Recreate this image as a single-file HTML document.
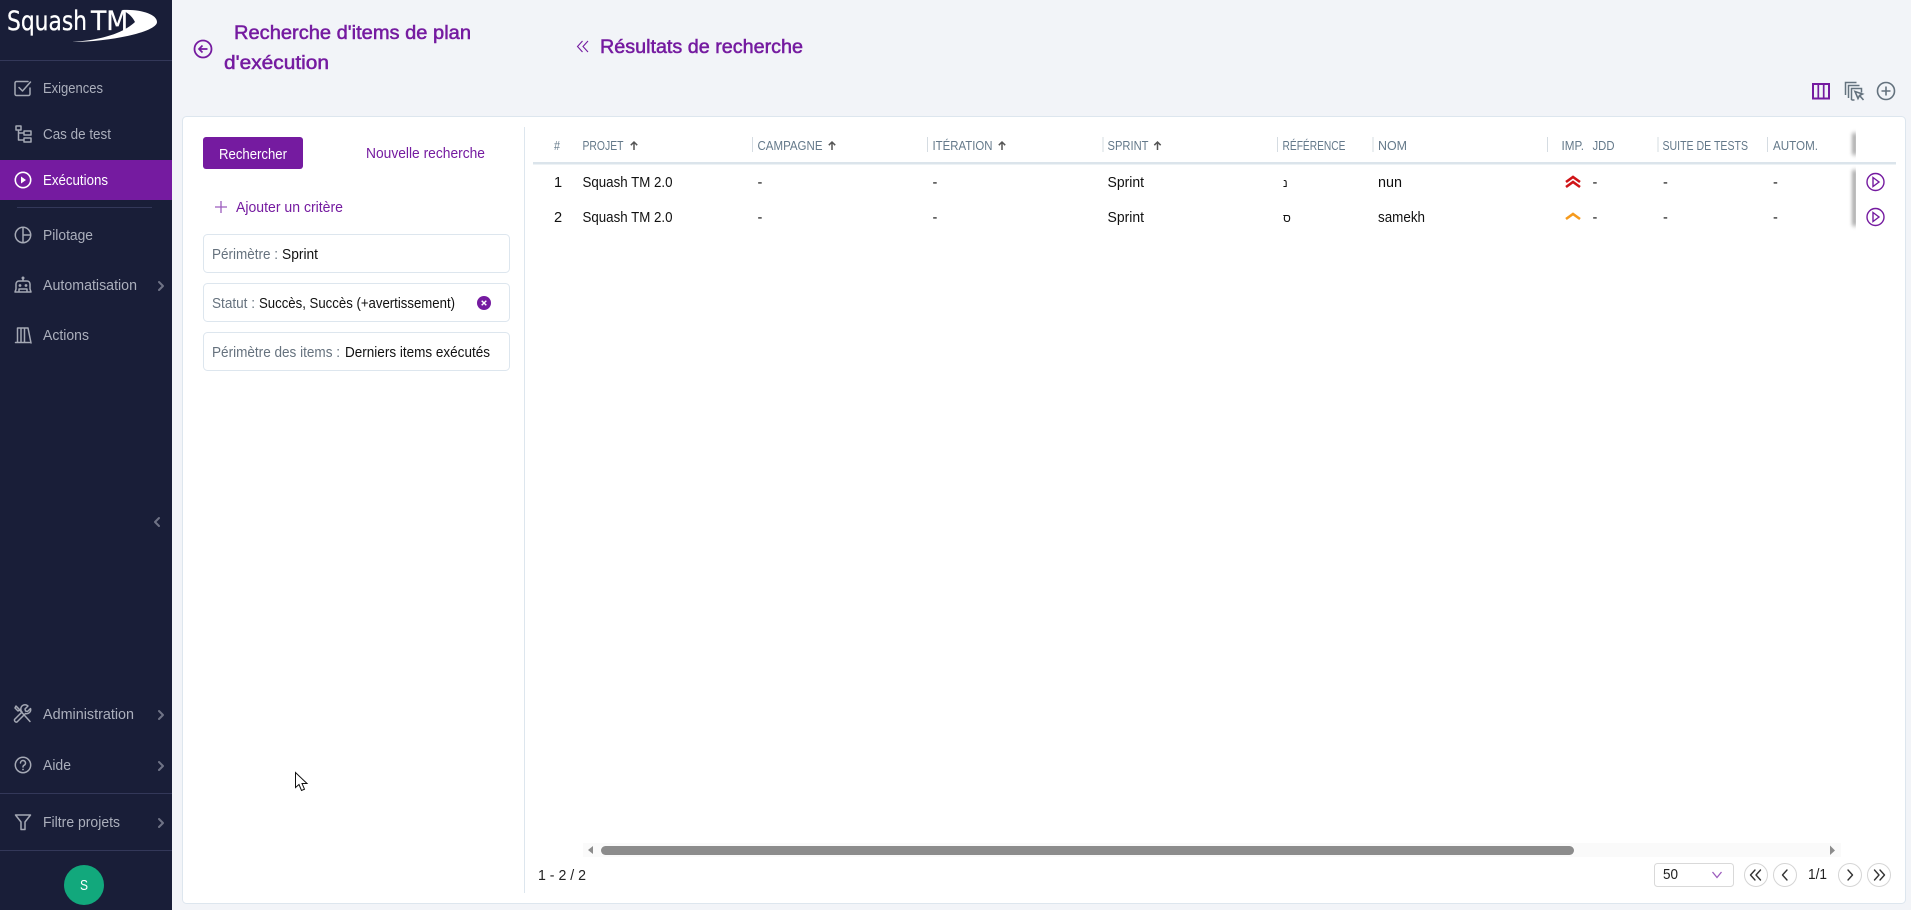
<!DOCTYPE html>
<html lang="fr"><head><meta charset="utf-8"><title>Recherche d'items de plan d'exécution</title>
<style>
html,body{margin:0;padding:0;width:1911px;height:910px;overflow:hidden;background:#f2f4f8}
svg{display:block}
text{font-family:"Liberation Sans","DejaVu Sans",sans-serif;font-size:14.6px;white-space:pre}
.n{fill:#abafbc}
.h{font-size:12.8px;fill:#64798a}
.r{fill:#111}
.p{fill:#751ba0}
.g{fill:#66727e}
.t{font-size:19px;fill:#751ba0;stroke:#751ba0;stroke-width:.5px}
.l{font-family:"DejaVu Sans","Liberation Sans",sans-serif;font-size:27px;fill:#fff;stroke:#fff;stroke-width:.3px}
.i{fill:none;stroke:#a4a8b4;stroke-width:1.5;stroke-linecap:round;stroke-linejoin:round}
.c{fill:none;stroke:#6f7386;stroke-width:2;stroke-linecap:round;stroke-linejoin:round}
.a{fill:none;stroke:#555;stroke-width:1.5}
.q{fill:#fff;stroke:#d5d5d5}
.k{fill:none;stroke:#333;stroke-width:1.4;stroke-linecap:round;stroke-linejoin:round}
</style></head><body>
<svg width="1911" height="910" viewBox="0 0 1911 910" xmlns="http://www.w3.org/2000/svg">
<defs><filter id="bl" x="-200%" y="-30%" width="500%" height="160%"><feGaussianBlur stdDeviation="2"/></filter></defs>

<!-- sidebar -->
<rect x="0" y="0" width="172" height="910" fill="#191e38"/>
<rect x="0" y="60" width="172" height="1" fill="#333859"/>
<text class="l" x="7" y="30" textLength="80" lengthAdjust="spacingAndGlyphs">Squash</text>
<text class="l" x="91" y="30" textLength="37" lengthAdjust="spacingAndGlyphs">TM</text>
<path d="M122 10C140 9 157 14 157 22C157 32 110 42 72 42C100 40 122 34 135 22C132 16 128 13 122 10Z" fill="#fff"/>

<!-- Exigences -->
<path class="i" d="M30 88v6a1.500 1.500 0 0 1-1.500 1.500h-12A1.500 1.500 0 0 1 15 94V83a1.500 1.500 0 0 1 1.500-1.500H28M19 87.500l3.500 3.500 8-9"/>
<text class="n" x="43" y="93" textLength="60" lengthAdjust="spacingAndGlyphs">Exigences</text>
<!-- Cas de test -->
<path class="i" d="M16 126h5v4h-5zM24 131h7v4h-7zM24 138h7v4h-7zM18.500 130v10H24M18.500 133H24"/>
<text class="n" x="43" y="139" textLength="68" lengthAdjust="spacingAndGlyphs">Cas de test</text>
<!-- Exécutions -->
<rect x="0" y="160" width="172" height="40" fill="#751ba0"/>
<circle cx="23" cy="180" r="7.700" fill="none" stroke="#fff" stroke-width="1.600"/>
<path d="M21 176.500l5 3.500-5 3.500z" fill="#fff"/>
<text x="43" y="185" style="fill:#fff" textLength="65" lengthAdjust="spacingAndGlyphs">Exécutions</text>
<rect x="17" y="207" width="135" height="1" fill="#333859"/>
<!-- Pilotage -->
<circle class="i" cx="23" cy="235" r="7.700"/><path class="i" d="M23 227.500v15M23 235h7.500"/>
<text class="n" x="43" y="240" textLength="50" lengthAdjust="spacingAndGlyphs">Pilotage</text>
<!-- Automatisation -->
<path class="i" d="M23 279v2M15 292l1-3v-5a3 3 0 0 1 3-3h8a3 3 0 0 1 3 3v5l1 3zM19 292v-3h8v3"/>
<circle cx="23" cy="278" r="1.500" fill="#a4a8b4"/><circle cx="20" cy="285.500" r="1.400" fill="#a4a8b4"/><circle cx="26" cy="285.500" r="1.400" fill="#a4a8b4"/>
<text class="n" x="43" y="290" textLength="94" lengthAdjust="spacingAndGlyphs">Automatisation</text>
<path class="c" d="M159 282l4 4-4 4"/>
<!-- Actions -->
<path class="i" d="M15.500 342.500h14M18 328h10M17.500 328v14M21 328v14M24.500 328v14M28 328l3 15"/>
<text class="n" x="43" y="340" textLength="46" lengthAdjust="spacingAndGlyphs">Actions</text>

<path class="c" d="M156 518l-4 4 4 4" transform="translate(3 0)"/>

<!-- Administration -->
<path class="i" d="M17 707l13 14.500M28 706l-3 3 .5 2 2 .5 3-3a4 4 0 0 1-5 5L17 722a2 2 0 0 1-2.500-2.500L22 712a4 4 0 0 1 6-6zM16 706l-1 2 3 3 2-1z"/>
<text class="n" x="43" y="719" textLength="91" lengthAdjust="spacingAndGlyphs">Administration</text>
<path class="c" d="M159 711l4 4-4 4"/>
<!-- Aide -->
<circle class="i" cx="23" cy="765" r="7.700"/><path class="i" d="M20.500 763a2.500 2.500 0 1 1 3.500 2.300c-.8.400-1 .9-1 1.700"/><circle cx="23" cy="769.500" r=".9" fill="#a4a8b4"/>
<text class="n" x="43" y="770" textLength="28" lengthAdjust="spacingAndGlyphs">Aide</text>
<path class="c" d="M159 762l4 4-4 4"/>
<rect x="0" y="793" width="172" height="1" fill="#333859"/>
<!-- Filtre projets -->
<path class="i" d="M15.500 815h15l-5.500 7v7.500h-4V822z"/>
<text class="n" x="43" y="827" textLength="77" lengthAdjust="spacingAndGlyphs">Filtre projets</text>
<path class="c" d="M159 819l4 4-4 4"/>
<rect x="0" y="850" width="172" height="1" fill="#333859"/>
<circle cx="84" cy="885" r="20" fill="#12a87c"/>
<text x="80" y="890" style="fill:#fff" textLength="8" lengthAdjust="spacingAndGlyphs">S</text>

<!-- header -->
<circle cx="203" cy="49" r="8.500" fill="none" stroke="#751ba0" stroke-width="1.800"/>
<path d="M207.500 49h-8.500M202.500 45.500L199 49l3.500 3.500" fill="none" stroke="#751ba0" stroke-width="1.700"/>
<text class="t" x="234" y="39" textLength="237" lengthAdjust="spacingAndGlyphs">Recherche d'items de plan</text>
<text class="t" x="224" y="69" textLength="105" lengthAdjust="spacingAndGlyphs">d'exécution</text>
<path d="M582.500 41l-5 5.500 5 5.500M588 41l-5 5.500 5 5.500" fill="none" stroke="#751ba0" stroke-width="1.100"/>
<text class="t" x="600" y="53" textLength="203" lengthAdjust="spacingAndGlyphs">Résultats de recherche</text>

<!-- toolbar -->
<rect x="1813" y="84" width="16" height="14.500" fill="none" stroke="#751ba0" stroke-width="2"/>
<path d="M1818.300 84v14.500M1823.700 84v14.500" stroke="#751ba0" stroke-width="1.700"/>
<path d="M1845.500 95v-12.500h11M1848.500 98v-12.500h11M1851.500 100v-11.500h10v4M1851.500 100h3" fill="none" stroke="#64727e" stroke-width="1.500"/>
<path d="M1855 91.500l7.500 2.500-3 1.500-1.500 3zM1860 96l3.500 4" fill="none" stroke="#64727e" stroke-width="1.600"/>
<circle cx="1886" cy="91" r="8.500" fill="none" stroke="#64727e" stroke-width="1.600"/>
<path d="M1886 86.500v9M1881.500 91h9" stroke="#64727e" stroke-width="1.600"/>

<!-- main panel -->
<rect x="182.500" y="116.500" width="1723" height="787" rx="4" fill="#fff" stroke="#dde6ee"/>
<rect x="524" y="127" width="1" height="766" fill="#dde6ee"/>

<!-- left pane -->
<rect x="203" y="137" width="100" height="32" rx="3" fill="#751ba0"/>
<text x="219" y="159" style="fill:#fff" textLength="68" lengthAdjust="spacingAndGlyphs">Rechercher</text>
<text class="p" x="366" y="158" textLength="119" lengthAdjust="spacingAndGlyphs">Nouvelle recherche</text>
<path d="M221 201v12M215 207h12" stroke="#9c5cbd" stroke-width="1.300"/>
<text class="p" x="236" y="212" textLength="107" lengthAdjust="spacingAndGlyphs">Ajouter un critère</text>

<rect x="203.500" y="234.500" width="306" height="38" rx="4" fill="#fff" stroke="#dde6ee"/>
<text class="g" x="212" y="259" textLength="66" lengthAdjust="spacingAndGlyphs">Périmètre :</text>
<text class="r" x="282" y="259" textLength="36" lengthAdjust="spacingAndGlyphs">Sprint</text>

<rect x="203.500" y="283.500" width="306" height="38" rx="4" fill="#fff" stroke="#dde6ee"/>
<text class="g" x="212" y="308" textLength="43" lengthAdjust="spacingAndGlyphs">Statut :</text>
<text class="r" x="259" y="308" textLength="196" lengthAdjust="spacingAndGlyphs">Succès, Succès (+avertissement)</text>
<circle cx="484" cy="303" r="7" fill="#751ba0"/>
<path d="M481.700 300.700l4.600 4.600M486.300 300.700l-4.600 4.600" stroke="#fff" stroke-width="1.400"/>

<rect x="203.500" y="332.500" width="306" height="38" rx="4" fill="#fff" stroke="#dde6ee"/>
<text class="g" x="212" y="357" textLength="128" lengthAdjust="spacingAndGlyphs">Périmètre des items :</text>
<text class="r" x="345" y="357" textLength="145" lengthAdjust="spacingAndGlyphs">Derniers items exécutés</text>

<!-- grid header -->
<text class="h" x="554" y="150" textLength="6" lengthAdjust="spacingAndGlyphs">#</text>
<text class="h" x="582.500" y="150" textLength="41" lengthAdjust="spacingAndGlyphs">PROJET</text>
<path class="a" d="M634 150v-8M630.800 145.200l3.200-3.200 3.200 3.200"/>
<rect x="752" y="137" width="1" height="15" fill="#d5dce2"/>
<text class="h" x="757.500" y="150" textLength="65" lengthAdjust="spacingAndGlyphs">CAMPAGNE</text>
<path class="a" d="M832 150v-8M828.800 145.200l3.200-3.200 3.200 3.200"/>
<rect x="927" y="137" width="1" height="15" fill="#d5dce2"/>
<text class="h" x="932.500" y="150" textLength="60" lengthAdjust="spacingAndGlyphs">ITÉRATION</text>
<path class="a" d="M1002 150v-8M998.800 145.200l3.200-3.200 3.200 3.200"/>
<rect x="1102.500" y="137" width="1" height="15" fill="#d5dce2"/>
<text class="h" x="1107.500" y="150" textLength="41" lengthAdjust="spacingAndGlyphs">SPRINT</text>
<path class="a" d="M1157.500 150v-8M1154.300 145.200l3.200-3.200 3.200 3.200"/>
<rect x="1277" y="137" width="1" height="15" fill="#d5dce2"/>
<text class="h" x="1282.500" y="150" textLength="63" lengthAdjust="spacingAndGlyphs">RÉFÉRENCE</text>
<rect x="1372.500" y="137" width="1" height="15" fill="#d5dce2"/>
<text class="h" x="1378" y="150" textLength="29" lengthAdjust="spacingAndGlyphs">NOM</text>
<rect x="1547" y="137" width="1" height="15" fill="#d5dce2"/>
<text class="h" x="1561.500" y="150" textLength="22.500" lengthAdjust="spacingAndGlyphs">IMP.</text>
<text class="h" x="1592.500" y="150" textLength="22" lengthAdjust="spacingAndGlyphs">JDD</text>
<rect x="1657.500" y="137" width="1" height="15" fill="#d5dce2"/>
<text class="h" x="1662.500" y="150" textLength="85.500" lengthAdjust="spacingAndGlyphs">SUITE DE TESTS</text>
<rect x="1767" y="137" width="1" height="15" fill="#d5dce2"/>
<text class="h" x="1773" y="150" textLength="45" lengthAdjust="spacingAndGlyphs">AUTOM.</text>

<!-- rows -->
<text class="r" x="554" y="187">1</text>
<text class="r" x="582.500" y="187" textLength="90" lengthAdjust="spacingAndGlyphs">Squash TM 2.0</text>
<text class="r" x="757.500" y="187">-</text>
<text class="r" x="932.500" y="187">-</text>
<text class="r" x="1107.500" y="187" textLength="36.500" lengthAdjust="spacingAndGlyphs">Sprint</text>
<text class="r" x="1283" y="187" style="font-size:12px">נ</text>
<text class="r" x="1378" y="187" textLength="24" lengthAdjust="spacingAndGlyphs">nun</text>
<path d="M1566 182l7-5 7 5M1566 187l7-5 7 5" fill="none" stroke="#d01417" stroke-width="2.600"/>
<text class="r" x="1592.500" y="187">-</text>
<text class="r" x="1663" y="187">-</text>
<text class="r" x="1773" y="187">-</text>

<text class="r" x="554" y="222">2</text>
<text class="r" x="582.500" y="222" textLength="90" lengthAdjust="spacingAndGlyphs">Squash TM 2.0</text>
<text class="r" x="757.500" y="222">-</text>
<text class="r" x="932.500" y="222">-</text>
<text class="r" x="1107.500" y="222" textLength="36.500" lengthAdjust="spacingAndGlyphs">Sprint</text>
<text class="r" x="1283" y="222" style="font-size:12px">ס</text>
<text class="r" x="1378" y="222" textLength="47" lengthAdjust="spacingAndGlyphs">samekh</text>
<path d="M1566 219l7-5 7 5" fill="none" stroke="#f59a1d" stroke-width="2.600"/>
<text class="r" x="1592.500" y="222">-</text>
<text class="r" x="1663" y="222">-</text>
<text class="r" x="1773" y="222">-</text>

<!-- frozen column shadow -->
<rect x="1853" y="133" width="3" height="22" fill="#000" opacity=".55" filter="url(#bl)"/>
<rect x="1853" y="170" width="3" height="56" fill="#000" opacity=".55" filter="url(#bl)"/>
<rect x="1856" y="125" width="40" height="37" fill="#fff"/>
<rect x="1856" y="165" width="40" height="72" fill="#fff"/>
<rect x="533" y="162" width="1363" height="2.500" fill="#dbe4eb"/>
<circle cx="1875.500" cy="182" r="8.500" fill="none" stroke="#751ba0" stroke-width="1.400"/>
<path d="M1873 177.500l6 4.500-6 4.500z" fill="none" stroke="#751ba0" stroke-width="1.400"/>
<circle cx="1875.500" cy="217" r="8.500" fill="none" stroke="#751ba0" stroke-width="1.400"/>
<path d="M1873 212.500l6 4.500-6 4.500z" fill="none" stroke="#751ba0" stroke-width="1.400"/>

<!-- scrollbar -->
<rect x="583" y="843" width="1258" height="14" fill="#fafafa"/>
<path d="M593 846l-5 4 5 4z" fill="#8c8c8c"/>
<path d="M1830 845.500l5 5-5 4.500z" fill="#8c8c8c"/>
<rect x="601" y="846" width="973" height="9" rx="4.500" fill="#8c8c8c"/>

<!-- footer -->
<text x="538" y="880" style="fill:#222" textLength="48" lengthAdjust="spacingAndGlyphs">1 - 2 / 2</text>
<rect x="1654.500" y="863.500" width="79" height="23" rx="3" fill="#fff" stroke="#d9d9d9"/>
<text x="1663" y="879" style="fill:#222" textLength="15" lengthAdjust="spacingAndGlyphs">50</text>
<path d="M1712.500 872l4.500 5.500 4.500-5.500" fill="none" stroke="#9c5cbd" stroke-width="1.300"/>
<circle class="q" cx="1756" cy="875" r="11.500"/>
<path class="k" d="M1755 870l-4.500 5 4.500 5M1760.500 870l-4.500 5 4.500 5"/>
<circle class="q" cx="1785" cy="875" r="11.500"/>
<path class="k" d="M1787 870l-4.500 5 4.500 5"/>
<text x="1808" y="879" style="fill:#222" textLength="19" lengthAdjust="spacingAndGlyphs">1/1</text>
<circle class="q" cx="1850" cy="875" r="11.500"/>
<path class="k" d="M1848 870l4.500 5-4.500 5"/>
<circle class="q" cx="1879" cy="875" r="11.500"/>
<path class="k" d="M1874.500 870l4.500 5-4.500 5M1880 870l4.500 5-4.500 5"/>

<!-- mouse cursor -->
<path d="M295.500 772.500v15l3.500-3 2.500 6 3-1.300-2.500-5.700h5z" fill="#fff" stroke="#111" stroke-width="1"/>
</svg>
</body></html>
